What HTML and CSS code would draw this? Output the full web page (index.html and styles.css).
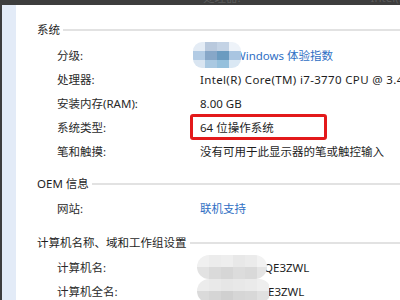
FILE: index.html
```html
<!DOCTYPE html>
<html lang="zh-CN">

<head>
  <meta charset="UTF-8">
  <title>系统</title>
  <link rel="stylesheet" href="styles.css">
</head>

<body>
  <div class="topbar">
    <span class="ghost ghost-label">处理器:</span>
    <span class="ghost ghost-value">Intel(R</span>
  </div>
  <div class="window">
    <div class="sidebar"></div>
    <div class="content">

      <div class="section first">
        <div class="section-title">系统</div>
        <div class="row tall">
          <div class="label">分级:</div>
          <div class="value">
            <div class="pixel-blur logo">
              <i style="background:#e4ecf5"></i><i style="background:#b9c9dd"></i><i style="background:#c4d3e5"></i><i style="background:#eef3f9"></i>
              <i style="background:#b2cbe4"></i><i style="background:#87a7c8"></i><i style="background:#6b9bc0"></i><i style="background:#a9c5e1"></i>
              <i style="background:#d9e5f1"></i><i style="background:#a9c8e1"></i><i style="background:#95c0dc"></i><i style="background:#dae8f4"></i>
            </div>
            <a class="link wei" href="#">Windows 体验指数</a>
          </div>
        </div>
        <div class="row">
          <div class="label">处理器:</div>
          <div class="value cpu">Intel(R) Core(TM) i7-3770 CPU @ 3.40GHz</div>
        </div>
        <div class="row">
          <div class="label">安装内存(RAM):</div>
          <div class="value">8.00 GB</div>
        </div>
        <div class="row">
          <div class="label">系统类型:</div>
          <div class="value"><span class="highlight">64 位操作系统</span></div>
        </div>
        <div class="row">
          <div class="label">笔和触摸:</div>
          <div class="value">没有可用于此显示器的笔或触控输入</div>
        </div>
      </div>

      <div class="section oem">
        <div class="section-title">OEM 信息</div>
        <div class="row">
          <div class="label">网站:</div>
          <div class="value"><a class="link" href="#">联机支持</a></div>
        </div>
      </div>

      <div class="section computer">
        <div class="section-title">计算机名称、域和工作组设置</div>
        <div class="row">
          <div class="label">计算机名:</div>
          <div class="value">
            <div class="pixel-blur name">
              <i style="background:#f0f0f0"></i><i style="background:#ececec"></i><i style="background:#eeeeee"></i><i style="background:#e8e8e8"></i><i style="background:#ebebeb"></i><i style="background:#f2f2f2"></i>
              <i style="background:#e2e2e2"></i><i style="background:#dadada"></i><i style="background:#d6d6d6"></i><i style="background:#dcdcdc"></i><i style="background:#d9d9d9"></i><i style="background:#e4e4e4"></i>
            </div>
            <span class="name-tail">QE3ZWL</span>
          </div>
        </div>
        <div class="row">
          <div class="label">计算机全名:</div>
          <div class="value">
            <div class="pixel-blur name wide">
              <i style="background:#ececec"></i><i style="background:#e9e9e9"></i><i style="background:#e6e6e6"></i><i style="background:#e8e8e8"></i><i style="background:#eaeaea"></i><i style="background:#eeeeee"></i>
              <i style="background:#dadada"></i><i style="background:#d5d5d5"></i><i style="background:#d0d0d0"></i><i style="background:#d6d6d6"></i><i style="background:#d8d8d8"></i><i style="background:#e0e0e0"></i>
            </div>
            <span class="name-tail">E3ZWL</span>
          </div>
        </div>
      </div>

    </div>
  </div>
</body>

</html>
```

FILE: styles.css
```css
* {
  margin: 0;
  padding: 0;
  box-sizing: border-box;
}

body {
  width: 400px;
  height: 300px;
  overflow: hidden;
  background: #ffffff;
  font-family: 'Noto Sans', 'Noto Sans CJK SC', sans-serif;
  font-size: 11.5px;
  color: #1e1e1e;
}

.topbar {
  height: 5px;
  background: #3d3d3d;
  overflow: hidden;
  display: flex;
  position: relative;
}

.ghost {
  color: #5a5a5a;
  line-height: 12px;
  margin-top: -8px;
  white-space: nowrap;
}

.ghost-label {
  margin-left: 203px;
}

.ghost-value {
  margin-left: 130px;
}

.window {
  display: flex;
  height: 295px;
}

.sidebar {
  width: 16px;
  border-left: 2px solid #3d3d3d;
  background: #e3ebf7;
}

.content {
  flex: 1;
  padding-left: 21px;
  overflow: hidden;
}

.section.first {
  margin-top: 11px;
}

.section.oem {
  margin-top: 7px;
}

.section.computer {
  margin-top: 9px;
}

.section-title {
  height: 26px;
  display: flex;
  align-items: center;
  white-space: nowrap;
}

.section-title::after {
  content: '';
  flex: 1;
  height: 2px;
  margin-left: 3px;
  margin-top: 2px;
  background: #e2e2e2;
}

.row {
  height: 24px;
  display: flex;
  align-items: center;
  padding-left: 20px;
  white-space: nowrap;
}

.row.tall {
  height: 25px;
}

.label {
  width: 143px;
  flex-shrink: 0;
  color: #2a2a2a;
}

.value {
  display: flex;
  align-items: center;
}

.value.cpu {
  letter-spacing: 0.35px;
}

.link {
  color: #2f6fc4;
  text-decoration: none;
}

.highlight {
  display: inline-block;
  border: 3px solid #e3191b;
  border-radius: 3px;
  padding: 2px 50px 2px 7px;
  margin: 0 0 0 -10px;
}

.pixel-blur {
  display: grid;
  grid-template-columns: repeat(4, 12px);
  grid-auto-rows: 9px;
  border-radius: 9px;
  overflow: hidden;
  filter: blur(0.6px);
  position: relative;
  z-index: 1;
}

.logo {
  margin-left: -7px;
  height: 26px;
}

.wei {
  margin-left: -6px;
}

.name {
  grid-template-columns: repeat(6, 12px);
  grid-auto-rows: 12px;
  border-radius: 12px;
  margin-left: -3px;
  width: 70px;
}

.name.wide {
  width: 74px;
}

.name-tail {
  margin-left: -3px;
}
```
